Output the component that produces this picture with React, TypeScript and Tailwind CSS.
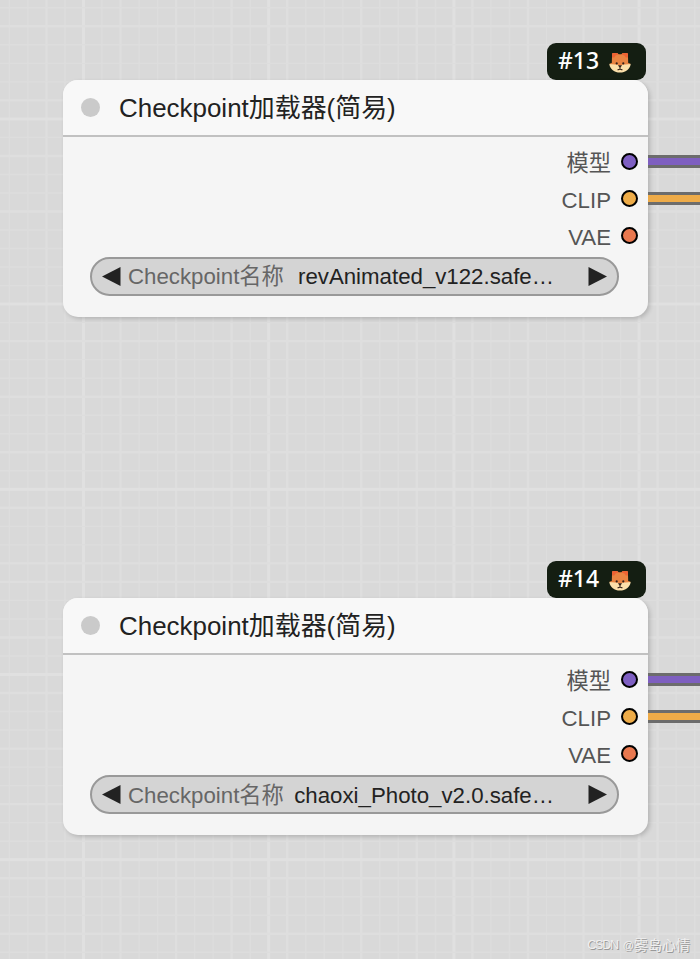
const PITCH = 18.52;
const X_ORIGIN = 83.5;
const Y_ORIGIN = 118.9;

// Lines drawn heavier than the base grid, counted in cells from the origin
const MEDIUM_COLS = [-2, 2, 5, 8, 11, 15, 18, 21, 24, 27, 31];
const MEDIUM_ROWS = [-5, -1, 2, 5, 12, 15, 18, 21, 24, 25, 28, 31, 34, 37, 41, 44];

const FONT = "font-['Liberation_Sans','Noto_Sans_CJK_SC',sans-serif]";

interface Output {
  name: string;
  dot: string;
  link?: string;
}

interface LoaderNode {
  id: number;
  checkpoint: string;
}

const outputs: Output[] = [
  { name: '模型', dot: 'bg-[#7e5fc2]', link: 'bg-[#7e5fc0]' },
  { name: 'CLIP', dot: 'bg-[#eeac48]', link: 'bg-[#eeab48]' },
  { name: 'VAE', dot: 'bg-[#e9784f]' },
];

const nodes: LoaderNode[] = [
  { id: 13, checkpoint: 'revAnimated_v122.safe…' },
  { id: 14, checkpoint: 'chaoxi_Photo_v2.0.safe…' },
];

const getLine = (index: number, medium: number[]) => {
  if (index % 10 === 0) return { stroke: '#e0e0e0', width: 3 };
  if (medium.includes(index)) return { stroke: '#dedede', width: 2.4 };
  return { stroke: '#dddddd', width: 1.4 };
};

function Grid() {
  const cols = Array.from({ length: 38 }, (_, i) => i - 4);
  const rows = Array.from({ length: 52 }, (_, i) => i - 6);
  return (
    <svg className="absolute inset-0" width="700" height="959">
      {cols.map((i) => {
        const line = getLine(i, MEDIUM_COLS);
        const x = X_ORIGIN + i * PITCH;
        return <line key={i} x1={x} x2={x} y1="0" y2="959" stroke={line.stroke} strokeWidth={line.width} />;
      })}
      {rows.map((i) => {
        const line = getLine(i, MEDIUM_ROWS);
        const y = Y_ORIGIN + i * PITCH;
        return <line key={i} x1="0" x2="700" y1={y} y2={y} stroke={line.stroke} strokeWidth={line.width} />;
      })}
    </svg>
  );
}

function FoxIcon() {
  return (
    <svg className="mt-[2px]" width="22" height="21" viewBox="0 0 22 21">
      <path d="M3.1 2Q3.2.9 4.4 1L8.6 1.2 9.6 2.2H12.4L13.4 1.2 17.6 1Q18.8.9 18.9 2L19.2 11 21.6 11.8 18 15H4L.4 11.8 2.8 11Z" fill="#e98442" />
      <path d="M3.1 2Q3.2.9 4.4 1L8.6 1.2 9.4 2.4 6.6 3.4 5.2 5.4 3 5.4ZM18.9 2Q18.8.9 17.6 1L13.4 1.2 12.6 2.4 15.4 3.4 16.8 5.4 19 5.4Z" fill="#ee6233" />
      <path d="M.3 12Q4 12.6 7.2 12.4L11 13.6 14.8 12.4Q18 12.6 21.7 12C21 17.4 16.5 20.6 11 20.6S1 17.4 .3 12Z" fill="#fbdfaa" />
      <circle cx="7.7" cy="11.4" r="1.1" fill="#332019" />
      <circle cx="14.3" cy="11.4" r="1.1" fill="#332019" />
      <path d="M8.9 13.2H13.1L11.7 15.2H10.3Z" fill="#332019" />
      <path d="M11 14.8V17.2M8.6 18 Q9.6 17.2 11 17.2T13.4 18" stroke="#332019" strokeWidth="1.1" fill="none" />
    </svg>
  );
}

function Badge({ id }: { id: number }) {
  return (
    <div className="mr-0.5 flex h-[37px] w-[99px] items-center self-end rounded-[9px] bg-[#141e12] pl-[11px] font-['Noto_Sans','Open_Sans',sans-serif] text-[23px] font-medium text-white">
      <span className="relative -top-px w-[51px] leading-none">#{id}</span>
      <FoxIcon />
    </div>
  );
}

function NodeCard({ node }: { node: LoaderNode }) {
  return (
    <div className="flex w-[585px] flex-col">
      <Badge id={node.id} />
      <div className="h-[237px] rounded-[15px] bg-[#f5f5f5] shadow-[2px_2px_4px_rgba(0,0,0,0.17)]">
        <div className="flex h-[57px] items-center rounded-t-[15px] border-b-2 border-[#c1c1c1] bg-[#f8f8f8] pl-[18px]">
          <div className="size-[19px] rounded-full bg-[#cacaca]" />
          <span className="mt-[3px] ml-[19px] text-[25.95px] leading-none whitespace-nowrap text-[#222]">Checkpoint加载器(简易)</span>
        </div>
        <div className="flex flex-col pt-[6px]">
          {outputs.map((output) => (
            <div key={output.name} className="flex h-[37px] items-center justify-end">
              <span className="mt-[5px] mr-[10px] text-[22.25px] leading-none text-[#555]">{output.name}</span>
              <div className={`size-[17px] rounded-full border-2 border-black ${output.dot}`} />
              <div className="relative w-[10px]">
                {output.link && (
                  <div className="absolute -top-[7px] left-[10px] flex h-[13px] w-[60px] items-center bg-[#6c6c6c]">
                    <div className={`h-[7px] w-full ${output.link}`} />
                  </div>
                )}
              </div>
            </div>
          ))}
        </div>
        <div className="mr-[29px] ml-[27px] mt-[3px] flex h-[39px] items-center rounded-full border-2 border-[#999] bg-[#d4d4d4] px-[10px] text-[22.25px] leading-none whitespace-nowrap">
          <svg width="19" height="19" viewBox="0 0 19 19">
            <path d="M0 9.5 18.5 0V19Z" fill="#222" />
          </svg>
          <span className="mt-[2px] ml-[7px] text-[#666]">Checkpoint名称</span>
          <span className="mt-[2px] mr-[34px] ml-auto text-[#222]">{node.checkpoint}</span>
          <svg width="19" height="19" viewBox="0 0 19 19">
            <path d="M19 9.5 .5 0V19Z" fill="#222" />
          </svg>
        </div>
      </div>
    </div>
  );
}

export default function App() {
  return (
    <div className={`relative h-[959px] w-[700px] overflow-hidden bg-[#d9d9d9] ${FONT}`}>
      <Grid />
      <div className="relative flex flex-col gap-[244.4px] pt-[43px] pl-[63px]">
        {nodes.map((node) => (
          <NodeCard key={node.id} node={node} />
        ))}
      </div>
      <div className="absolute right-[10px] bottom-[7px] flex items-center text-[14px] leading-none text-[#f0f0f0] [text-shadow:1px_1px_0_#999]">
        <span className="mr-[5px] text-[12.5px] tracking-[-1.2px]">CSDN</span>
        <span className="text-[11px]">@</span>
        <span>雾岛心情</span>
      </div>
    </div>
  );
}
